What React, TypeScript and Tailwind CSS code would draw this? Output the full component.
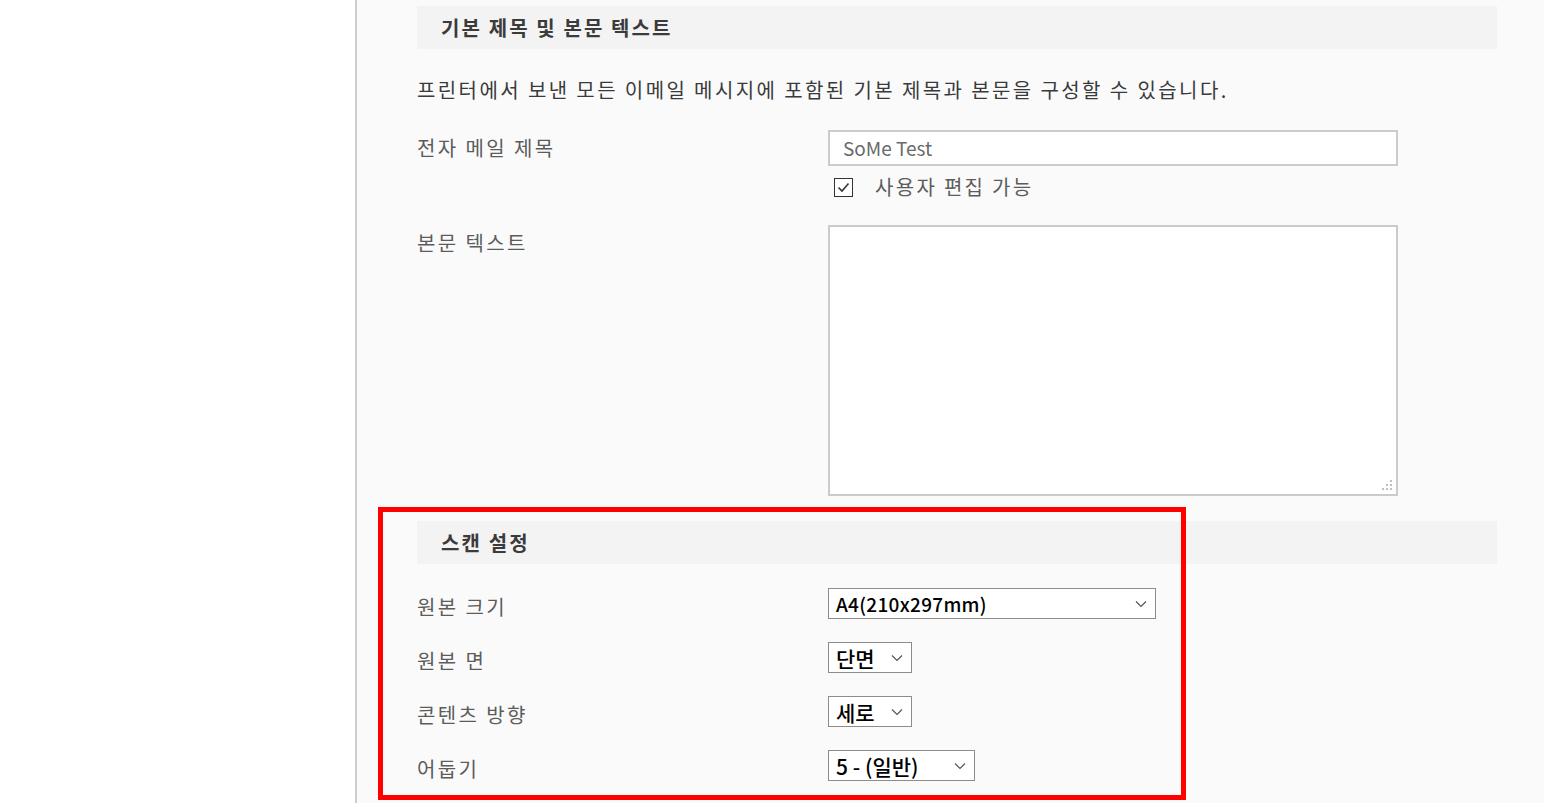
import React from "react";

type ScanRow = {
  label: string;
  value: string;
  width: string;
  text: string;
};

const scanRows: ScanRow[] = [
  { label: "원본 크기", value: "A4(210x297mm)", width: "w-[328px]", text: "text-[19px] tracking-[0.3px]" },
  { label: "원본 면", value: "단면", width: "w-[84px]", text: "text-[21px]" },
  { label: "콘텐츠 방향", value: "세로", width: "w-[84px]", text: "text-[21px]" },
  { label: "어둡기", value: "5 - (일반)", width: "w-[147px]", text: "text-[21px]" },
];

const font = "font-['Noto_Sans_CJK_KR','Noto_Sans',sans-serif]";

const Chevron = () => (
  <svg width="12" height="8" viewBox="0 0 12 8" className="shrink-0">
    <path d="M1 1.5 L6 6.5 L11 1.5" fill="none" stroke="#555" strokeWidth="1.2" />
  </svg>
);

const SectionHeader = ({ title }: { title: string }) => (
  <div className="flex h-[43px] items-center bg-[#f3f3f3] pl-[24px]">
    <h2 className="text-[20px] font-bold tracking-[2.1px] text-[#3b3b3b]">{title}</h2>
  </div>
);

const App: React.FC = () => {
  return (
    <div className={`flex h-[803px] overflow-hidden bg-white ${font}`}>
      <aside className="w-[355px] shrink-0 bg-white" />
      <div className="w-[2px] shrink-0 bg-[#cdcdcd]" />
      <main className="relative flex-1 bg-[#fafafa] pl-[60px] pt-[6px]">
        <div className="w-[1080px]">
          <SectionHeader title="기본 제목 및 본문 텍스트" />
          <p className="mt-[26px] whitespace-nowrap text-[20px] leading-[30px] tracking-[2.4px] text-[#3a3a3a]">
            프린터에서 보낸 모든 이메일 메시지에 포함된 기본 제목과 본문을 구성할 수 있습니다.
          </p>

          <div className="mt-[25px] grid grid-cols-[411px_570px]">
            <label className="text-[20px] leading-[36px] tracking-[2.4px] text-[#5c5c5c]">전자 메일 제목</label>
            <div>
              <div className="flex h-[36px] items-center border-2 border-[#cbcbcb] bg-white pl-[13px] text-[19px] text-[#6a6a6a]">
                SoMe Test
              </div>
              <div className="mt-[11px] flex items-center">
                <span className="ml-[6px] flex h-[19px] w-[19px] items-center justify-center border-[1.5px] border-[#333] bg-white">
                  <svg width="13" height="11" viewBox="0 0 13 11">
                    <path d="M1.5 5.5 L5 9 L11.5 1.5" fill="none" stroke="#333" strokeWidth="1.6" />
                  </svg>
                </span>
                <span className="ml-[22px] text-[20px] leading-[20px] tracking-[2.3px] text-[#5c5c5c]">사용자 편집 가능</span>
              </div>
            </div>
          </div>

          <div className="mt-[28px] grid grid-cols-[411px_570px]">
            <label className="text-[20px] leading-[36px] tracking-[2.4px] text-[#5c5c5c]">본문 텍스트</label>
            <div className="relative h-[271px] border-2 border-[#cbcbcb] bg-white">
              <svg width="12" height="12" viewBox="0 0 12 12" className="absolute bottom-[3px] right-[3px]">
                <circle cx="10" cy="2" r="1" fill="#aaa" />
                <circle cx="6" cy="6" r="1" fill="#aaa" />
                <circle cx="10" cy="6" r="1" fill="#aaa" />
                <circle cx="2" cy="10" r="1" fill="#aaa" />
                <circle cx="6" cy="10" r="1" fill="#aaa" />
                <circle cx="10" cy="10" r="1" fill="#aaa" />
              </svg>
            </div>
          </div>

          <div className="mt-[25px]">
            <SectionHeader title="스캔 설정" />
          </div>

          <div className="mt-[24px] flex flex-col gap-[22px]">
            {scanRows.map((row) => (
              <div key={row.label} className="grid h-[32px] grid-cols-[411px_auto] items-start">
                <span className="text-[20px] leading-[38px] tracking-[2.4px] text-[#5c5c5c]">{row.label}</span>
                <div
                  className={`flex h-[31px] items-center justify-between border border-[#8c8c8c] bg-white pl-[7px] pr-[8px] ${row.width}`}
                >
                  <span className={`font-medium leading-[28px] text-black ${row.text}`}>{row.value}</span>
                  <Chevron />
                </div>
              </div>
            ))}
          </div>
        </div>

        {/* annotation frame */}
        <div className="pointer-events-none absolute left-[21px] top-[507px] h-[293px] w-[808px] border-[5px] border-[#ff0000]" />
      </main>
    </div>
  );
};

export default App;
